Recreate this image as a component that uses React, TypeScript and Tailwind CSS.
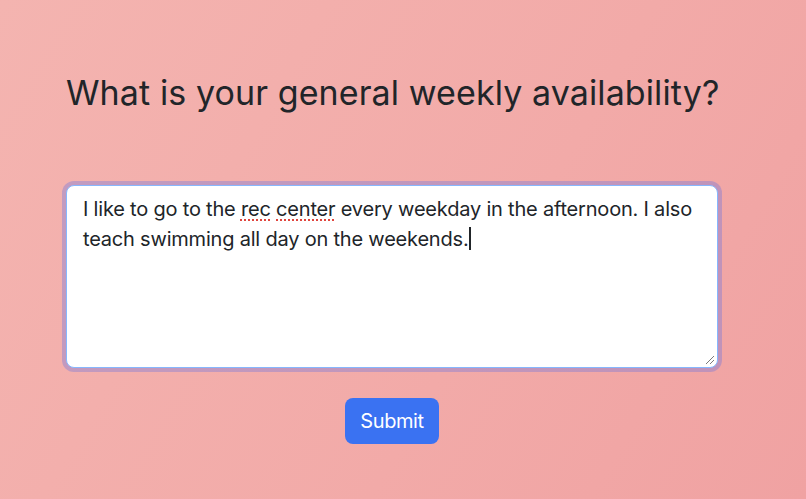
import React from "react";

export default function App() {
  return (
    <div
      className="w-[806px] h-[499px] overflow-hidden bg-[linear-gradient(120deg,#f4b4b0_0%,#f2aaa8_60%,#f0a2a2_100%)] text-[#212529]"
      style={{ fontFamily: "Inter, 'Noto Sans', sans-serif" }}
    >
      <div className="ml-[66px] w-[652px] flex flex-col">
        <h1 className="mt-[73px] text-[34px] leading-[1.2] font-normal tracking-[0.1px] whitespace-nowrap">
          What is your general weekly availability?
        </h1>
        <div className="relative mt-[71px] h-[183px] w-[652px] rounded-[8px] border border-[#86b7fe] bg-white shadow-[0_0_0_4px_rgba(90,110,230,0.32)] px-[16px] py-[8px] text-[20px] leading-[30px] tracking-[-0.2px]">
          <div className="whitespace-nowrap">
            I like to go to the{" "}
            <span className="underline decoration-dotted decoration-[#e0453e] decoration-2 underline-offset-[4px]">
              rec
            </span>{" "}
            <span className="underline decoration-dotted decoration-[#e0453e] decoration-2 underline-offset-[4px]">
              center
            </span>{" "}
            every weekday in the afternoon. I also
          </div>
          <div className="whitespace-nowrap flex items-center">
            <span>teach swimming all day on the weekends.</span>
            <span className="inline-block w-[1.5px] h-[23px] bg-[#212529] ml-[1px]" />
          </div>
          <svg
            className="absolute right-[2px] bottom-[2px]"
            width="10"
            height="10"
            viewBox="0 0 10 10"
          >
            <line x1="1" y1="9" x2="9" y2="1" stroke="#7a7a7a" strokeWidth="1" />
            <line x1="5" y1="9" x2="9" y2="5" stroke="#7a7a7a" strokeWidth="1" />
          </svg>
        </div>
        <div className="mt-[30px] flex justify-center">
          <button className="h-[46px] px-[15px] rounded-[8px] bg-[#3a72f2] text-white text-[20px] leading-[30px] tracking-[-0.4px]">
            Submit
          </button>
        </div>
      </div>
    </div>
  );
}
